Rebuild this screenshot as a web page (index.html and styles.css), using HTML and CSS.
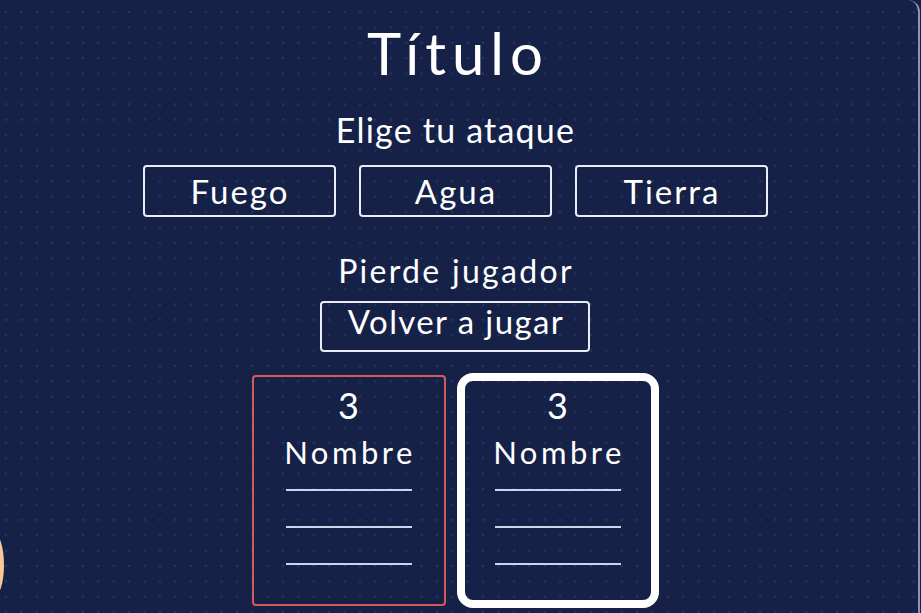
FILE: index.html
```html
<!DOCTYPE html>
<html lang="es">
<head>
<meta charset="utf-8">
<title>Título</title>
<link rel="stylesheet" href="styles.css">
</head>
<body>
<div class="glow"></div>
<main class="frame">
  <h1 class="title">Título</h1>
  <h2 class="prompt">Elige tu ataque</h2>
  <div class="attacks">
    <button class="btn btn--attack">Fuego</button>
    <button class="btn btn--attack">Agua</button>
    <button class="btn btn--attack">Tierra</button>
  </div>
  <p class="result">Pierde jugador</p>
  <button class="btn btn--restart">Volver a jugar</button>
  <div class="cards">
    <section class="card card--lost">
      <div class="card__lives">3</div>
      <div class="card__name">Nombre</div>
      <div class="card__blank"></div>
      <div class="card__blank"></div>
      <div class="card__blank"></div>
    </section>
    <section class="card card--active">
      <div class="card__lives">3</div>
      <div class="card__name">Nombre</div>
      <div class="card__blank"></div>
      <div class="card__blank"></div>
      <div class="card__blank"></div>
    </section>
  </div>
</main>
</body>
</html>
```

FILE: styles.css
```css
* { box-sizing: border-box; }

html, body {
  margin: 0;
  height: 100%;
  overflow: hidden;
}

body {
  position: relative;
  background-color: #152147;
  background-image: radial-gradient(circle, rgba(70, 98, 165, 0.32) 1.1px, transparent 1.6px);
  background-size: 15.4px 15.4px;
  background-position: -1.7px 4.3px;
  font-family: Lato, "Liberation Sans", sans-serif;
  color: #ffffff;
}

.glow {
  position: absolute;
  left: -18px;
  top: 532px;
  width: 22px;
  height: 66px;
  border-radius: 50%;
  background: #f8c896;
  filter: blur(0.6px);
}

.frame {
  width: 920px;
  height: 613px;
  padding: 18px 8px 0 0;
  border-right: 2px solid #8a95b5;
  border-top-right-radius: 12px;
  display: flex;
  flex-direction: column;
  align-items: center;
}

.title {
  margin: 0;
  padding-left: 6px;
  font-size: 58px;
  line-height: 70px;
  font-weight: 400;
  letter-spacing: 6px;
}

.prompt {
  margin: 22px 0 0;
  padding-left: 1px;
  font-size: 34px;
  line-height: 40px;
  font-weight: 400;
  letter-spacing: 1.2px;
}

.attacks {
  margin-top: 15px;
  display: flex;
  gap: 23px;
}

.btn {
  font-family: inherit;
  color: #ffffff;
  background: transparent;
  border: 2px solid #e9edf6;
  border-radius: 4px;
  padding: 0 0 0 2px;
  font-size: 33px;
  letter-spacing: 2px;
}

.btn--attack {
  width: 193px;
  height: 52px;
  line-height: 48px;
}

.result {
  margin: 34px 0 0;
  padding-left: 2px;
  font-size: 32px;
  line-height: 40px;
  letter-spacing: 2.3px;
}

.btn--restart {
  margin-top: 10px;
  width: 270px;
  height: 51px;
  line-height: 36px;
  padding-bottom: 11px;
  letter-spacing: 1.4px;
}

.cards {
  margin-top: 21px;
  display: flex;
  align-items: center;
  gap: 11px;
}

.card {
  display: flex;
  flex-direction: column;
  align-items: center;
}

.card--lost {
  width: 194px;
  height: 231px;
  border: 2px solid #d8585a;
  border-radius: 4px;
  padding-top: 8px;
}

.card--active {
  width: 202px;
  height: 235px;
  border: 8px solid #ffffff;
  border-radius: 16px;
  padding-top: 4px;
}

.card__lives {
  font-size: 36px;
  line-height: 40px;
}

.card__name {
  margin-top: 9px;
  padding-left: 3px;
  font-size: 31px;
  line-height: 36px;
  letter-spacing: 3.5px;
}

.card__blank {
  width: 126px;
  height: 2px;
  background: #cdd5ee;
  margin-top: 35px;
}

.card__name + .card__blank {
  margin-top: 19px;
}
```
